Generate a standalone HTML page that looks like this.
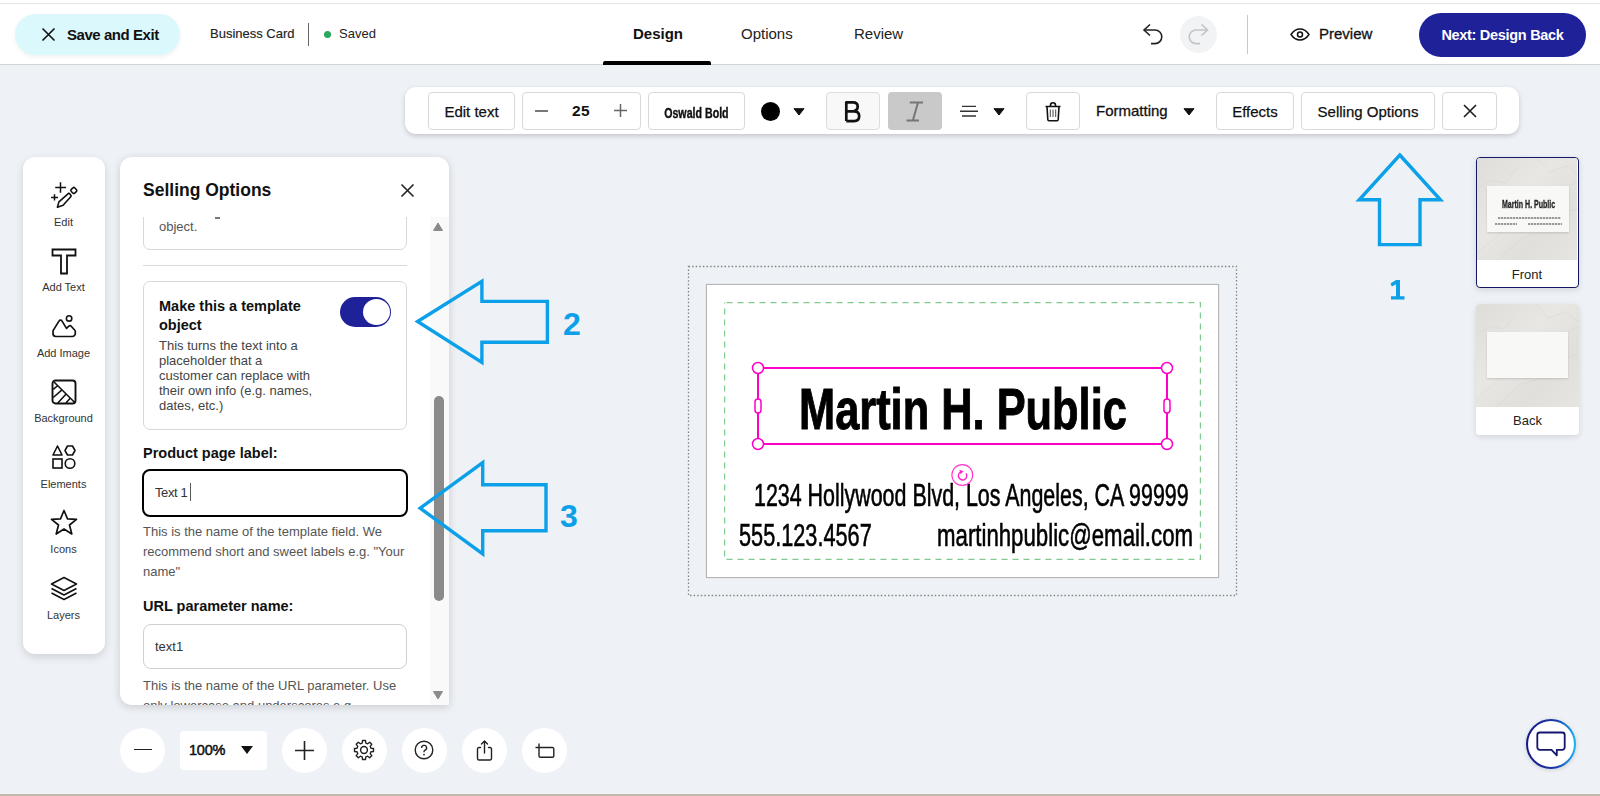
<!DOCTYPE html>
<html><head><meta charset="utf-8">
<style>
*{box-sizing:border-box;margin:0;padding:0}
html,body{width:1600px;height:796px;overflow:hidden}
body{background:#eef1f6;font-family:"Liberation Sans",sans-serif;color:#111;position:relative}
.a{position:absolute}
#topline{left:0;top:0;width:1600px;height:4px;background:#fff;border-bottom:1px solid #e6e6e6}
#hdr{left:0;top:4px;width:1600px;height:61px;background:#fff;border-bottom:1px solid #d4d4d4}
#botline{left:0;top:794px;width:1600px;height:2px;background:#c4b8a9}
.btn{position:absolute;border:1px solid #d9d9d9;border-radius:4px;background:#fff;font-size:15px;display:flex;align-items:center;justify-content:center;color:#111;-webkit-text-stroke:0.25px #111}
.ico svg{display:block}
</style></head><body>
<div class="a" id="topline"></div>
<div class="a" id="hdr"></div>
<div class="a" id="botline"></div>

<!-- header -->
<div class="a" style="left:15px;top:14px;width:165px;height:41px;border-radius:21px;background:#dbf8fd;box-shadow:0 2px 4px rgba(0,0,0,.06)"></div>
<svg class="a" style="left:41px;top:27px" width="15" height="15" viewBox="0 0 15 15"><path d="M1.5 1.5L13.5 13.5M13.5 1.5L1.5 13.5" stroke="#111" stroke-width="1.6"/></svg>
<div class="a" style="left:67px;top:26px;font-size:15px;font-weight:bold;color:#111;letter-spacing:-0.45px">Save and Exit</div>
<div class="a" style="left:210px;top:26px;font-size:13px;color:#222;-webkit-text-stroke:0.15px #222">Business Card</div>
<div class="a" style="left:308px;top:23px;width:1px;height:23px;background:#666"></div>
<div class="a" style="left:324px;top:31px;width:7px;height:7px;border-radius:50%;background:#27a85a"></div>
<div class="a" style="left:339px;top:26px;font-size:13px;color:#222">Saved</div>

<div class="a" style="left:633px;top:25px;font-size:15px;font-weight:bold;color:#111">Design</div>
<div class="a" style="left:603px;top:61px;width:108px;height:4px;background:#000;border-radius:2px 2px 0 0"></div>
<div class="a" style="left:741px;top:25px;font-size:15px;color:#222">Options</div>
<div class="a" style="left:854px;top:25px;font-size:15px;color:#222">Review</div>


<svg class="a" style="left:1141px;top:22px" width="26" height="24" viewBox="0 0 26 24"><path d="M9 2.5L3 8L9 13.5" fill="none" stroke="#222" stroke-width="1.6"/><path d="M3 8H14A6.8 6.8 0 0 1 14 21.6H10" fill="none" stroke="#222" stroke-width="1.6"/></svg>
<div class="a" style="left:1180px;top:16px;width:37px;height:37px;border-radius:50%;background:#f2f3f5"></div>
<svg class="a" style="left:1185px;top:22px" width="26" height="24" viewBox="0 0 26 24"><path d="M16.5 2.5L22.5 8L16.5 13.5" fill="none" stroke="#c4c4c4" stroke-width="1.6"/><path d="M22.5 8H11A6.8 6.8 0 0 0 11 21.6H15" fill="none" stroke="#c4c4c4" stroke-width="1.6"/></svg>
<div class="a" style="left:1247px;top:15px;width:1px;height:39px;background:#c8c8c8"></div>
<svg class="a" style="left:1290px;top:28px" width="20" height="13" viewBox="0 0 20 13"><path d="M1 6.5C4 2 7 1 10 1S16 2 19 6.5C16 11 13 12 10 12S4 11 1 6.5Z" fill="none" stroke="#111" stroke-width="1.4"/><circle cx="10" cy="6.5" r="2.5" fill="none" stroke="#111" stroke-width="1.5"/></svg>
<div class="a" style="left:1319px;top:25px;font-size:15px;color:#111;-webkit-text-stroke:0.3px #111">Preview</div>
<div class="a" style="left:1419px;top:13px;width:167px;height:44px;border-radius:22px;background:#1f2199;color:#fff;font-size:14.5px;font-weight:bold;display:flex;align-items:center;justify-content:center;letter-spacing:-0.3px">Next: Design Back</div>

<!-- toolbar -->
<div class="a" style="left:405px;top:87px;width:1114px;height:47px;background:#fff;border-radius:11px;box-shadow:0 2px 5px rgba(0,0,0,.18)"></div>
<div class="btn" style="left:428px;top:92px;width:87px;height:38px">Edit text</div>
<div class="btn" style="left:522px;top:92px;width:119px;height:38px"></div>
<div class="a" style="left:535px;top:110px;width:13px;height:1.5px;background:#777"></div>
<div class="a" style="left:572px;top:102px;font-size:15.5px;font-weight:bold;letter-spacing:0.5px">25</div>
<svg class="a" style="left:613px;top:103px" width="15" height="15" viewBox="0 0 15 15"><path d="M7.5 1V14M1 7.5H14" stroke="#666" stroke-width="1.5"/></svg>
<div class="btn" style="left:648px;top:92px;width:97px;height:38px"><span style="display:inline-block;margin-top:3px;font-weight:bold;font-size:14px;transform:scaleX(.76);-webkit-text-stroke:0.4px #111;letter-spacing:0px;white-space:nowrap">Oswald Bold</span></div>
<div class="a" style="left:761px;top:102px;width:19px;height:19px;border-radius:50%;background:#000"></div>
<svg class="a" style="left:793px;top:107.5px" width="12" height="8" viewBox="0 0 12 8"><path d="M1 0.7H11L6 7Z" stroke="#111" stroke-width="1" stroke-linejoin="round" fill="#111"/></svg>
<div class="a" style="left:826px;top:92px;width:54px;height:38px;border:1px solid #dcdcdc;border-radius:4px;background:#f8f8f8"></div>
<svg class="a" style="left:844px;top:101px" width="18" height="23" viewBox="0 0 18 23"><path d="M2.3 20.1V1.4H9C12.2 1.4 13.7 3.1 13.7 5.6C13.7 8.2 12.2 9.9 9.3 10.3H2.3M2.3 10.3H10C13.4 10.3 15.2 12.1 15.2 15C15.2 18.3 13.2 20.1 10 20.1H2.3" fill="none" stroke="#111" stroke-width="2.7" stroke-linejoin="round"/></svg>
<div class="a" style="left:888px;top:92px;width:54px;height:38px;border-radius:4px;background:#c9c9c9"></div>
<svg class="a" style="left:904px;top:101px" width="20" height="22" viewBox="0 0 20 22"><path d="M5.8 1.5H19M2.5 19.6H15M14 1.5L8.8 19.6" fill="none" stroke="#777" stroke-width="2"/></svg>
<svg class="a" style="left:959px;top:105px" width="20" height="13" viewBox="0 0 20 13"><path d="M3 1.4H17M1 6.2H19M3 11H17" stroke="#333" stroke-width="1.4"/></svg>
<svg class="a" style="left:993px;top:107.5px" width="12" height="8" viewBox="0 0 12 8"><path d="M1 0.7H11L6 7Z" stroke="#111" stroke-width="1" stroke-linejoin="round" fill="#111"/></svg>
<div class="btn" style="left:1026px;top:92px;width:54px;height:38px"></div>
<svg class="a" style="left:1044px;top:101px" width="18" height="22" viewBox="0 0 18 22"><path d="M1.5 5.5H16.5M6.5 5.5V4.2A2.5 2.5 0 0 1 11.5 4.2V5.5M3 5.5L3.8 18.5Q3.9 19.8 5 19.8H13Q14.1 19.8 14.2 18.5L15 5.5" fill="none" stroke="#111" stroke-width="1.6" stroke-linejoin="round"/><path d="M6.3 8.5V16M9 8.5V16M11.7 8.5V16" stroke="#333" stroke-width="0.9"/></svg>
<div class="a" style="left:1096px;top:102px;font-size:15px;color:#111;-webkit-text-stroke:0.3px #111">Formatting</div>
<svg class="a" style="left:1183px;top:107.5px" width="12" height="8" viewBox="0 0 12 8"><path d="M1 0.7H11L6 7Z" stroke="#111" stroke-width="1" stroke-linejoin="round" fill="#111"/></svg>
<div class="btn" style="left:1216px;top:92px;width:78px;height:38px">Effects</div>
<div class="btn" style="left:1301px;top:92px;width:134px;height:38px">Selling Options</div>
<div class="btn" style="left:1442px;top:92px;width:55px;height:38px"><svg width="14" height="14" viewBox="0 0 14 14"><path d="M1 1L13 13M13 1L1 13" stroke="#222" stroke-width="1.7"/></svg></div>

<!-- left sidebar -->
<div class="a" style="left:23px;top:157px;width:82px;height:497px;background:#fff;border-radius:12px;box-shadow:0 3px 8px rgba(0,0,0,.14)"></div>
<svg class="a" style="left:48px;top:180px" width="32" height="30" viewBox="0 0 32 30"><path d="M12.5 2.3V12.7M7.2 7.6H18.1M6.5 14.2V20.4M3.1 17.4H10" stroke="#111" stroke-width="1.5"/><path d="M21.1 12.9L10.9 21.9L9.4 27.2L15.1 25.3L23.4 16" fill="none" stroke="#111" stroke-width="1.6" stroke-linejoin="round"/><path d="M21.1 12.9L23.4 16" stroke="#111" stroke-width="1.6"/><rect x="23.3" y="8" width="5" height="5" rx="1.3" transform="rotate(-42 25.8 10.5)" fill="none" stroke="#111" stroke-width="1.6"/></svg>
<div class="a lbl" style="left:22px;top:216px;width:83px;text-align:center;font-size:11px;color:#333">Edit</div>
<svg class="a" style="left:51px;top:248px" width="26" height="27" viewBox="0 0 26 27"><path d="M1.5 1.5H24.5V7.5H16V25.5H10V7.5H1.5Z" fill="none" stroke="#111" stroke-width="1.8"/></svg>
<div class="a lbl" style="left:22px;top:281px;width:83px;text-align:center;font-size:11px;color:#333">Add Text</div>
<svg class="a" style="left:51px;top:313px" width="27" height="26" viewBox="0 0 27 26"><circle cx="18.1" cy="5.4" r="2.7" fill="none" stroke="#111" stroke-width="1.6"/><path d="M5 23.5H21A3 3 0 0 0 24.3 20.5V18.6A2.2 2.2 0 0 0 23.6 17L20.2 13.2A1.6 1.6 0 0 0 17.9 13.1L15.5 15.4L10.9 7.9A1.6 1.6 0 0 0 8.1 7.9L2.7 16.6A3.4 3.4 0 0 0 2 18.6V20.5A3 3 0 0 0 5 23.5Z" fill="none" stroke="#111" stroke-width="1.7" stroke-linejoin="round"/></svg>
<div class="a lbl" style="left:22px;top:347px;width:83px;text-align:center;font-size:11px;color:#333">Add Image</div>
<svg class="a" style="left:51px;top:379px" width="26" height="26" viewBox="0 0 26 26"><rect x="1.5" y="1.5" width="23" height="23" rx="3" fill="none" stroke="#111" stroke-width="1.9"/><path d="M3 3L23.5 23.2M2.2 10.4L6.3 7M2.2 18.5L10.4 11.3M6.8 24L14.9 15.2M14.9 24L19 19.5" stroke="#111" stroke-width="1.6"/></svg>
<div class="a lbl" style="left:22px;top:412px;width:83px;text-align:center;font-size:11px;color:#333">Background</div>
<svg class="a" style="left:51px;top:444px" width="26" height="26" viewBox="0 0 26 26"><path d="M2 11H11L6.5 2Z" fill="none" stroke="#111" stroke-width="1.6" stroke-linejoin="round"/><path d="M16.5 2H21.5L24 6.5L21.5 11H16.5L14 6.5Z" fill="none" stroke="#111" stroke-width="1.6" stroke-linejoin="round"/><rect x="2" y="15" width="9" height="9" fill="none" stroke="#111" stroke-width="1.6"/><circle cx="19" cy="19.5" r="4.8" fill="none" stroke="#111" stroke-width="1.6"/></svg>
<div class="a lbl" style="left:22px;top:478px;width:83px;text-align:center;font-size:11px;color:#333">Elements</div>
<svg class="a" style="left:50px;top:509px" width="28" height="27" viewBox="0 0 28 27"><path d="M14 1.5L17.5 9.8L26.5 10.3L19.5 16L21.8 25L14 20L6.2 25L8.5 16L1.5 10.3L10.5 9.8Z" fill="none" stroke="#111" stroke-width="1.7" stroke-linejoin="round"/></svg>
<div class="a lbl" style="left:22px;top:543px;width:83px;text-align:center;font-size:11px;color:#333">Icons</div>
<svg class="a" style="left:50px;top:576px" width="28" height="25" viewBox="0 0 28 25"><path d="M14 1.5L26.5 8L14 14.5L1.5 8Z" fill="none" stroke="#111" stroke-width="1.6" stroke-linejoin="round"/><path d="M1.5 12.5L14 19L26.5 12.5M1.5 17L14 23.5L26.5 17" fill="none" stroke="#111" stroke-width="1.6" stroke-linejoin="round"/></svg>
<div class="a lbl" style="left:22px;top:609px;width:83px;text-align:center;font-size:11px;color:#333">Layers</div>

<!-- panel -->
<div class="a" style="left:120px;top:157px;width:329px;height:548px;background:#fff;border-radius:12px 12px 0 12px;box-shadow:0 2px 8px rgba(0,0,0,.16)"></div>
<div class="a" style="left:143px;top:180px;font-size:17.5px;font-weight:bold;color:#111">Selling Options</div>
<svg class="a" style="left:400px;top:183px" width="15" height="15" viewBox="0 0 15 15"><path d="M1.5 1.5L13.5 13.5M13.5 1.5L1.5 13.5" stroke="#222" stroke-width="1.6"/></svg>
<div class="a" style="left:430px;top:217px;width:19px;height:488px;background:#f9f9f9"></div>
<svg class="a" style="left:433px;top:222px" width="10" height="9" viewBox="0 0 10 9"><path d="M5 1L9.5 8.5H0.5Z" fill="#8a8a8a" stroke="#8a8a8a" stroke-linejoin="round"/></svg>
<svg class="a" style="left:433px;top:691px" width="10" height="9" viewBox="0 0 10 9"><path d="M5 8L9.5 0.5H0.5Z" fill="#8a8a8a" stroke="#8a8a8a" stroke-linejoin="round"/></svg>
<div class="a" style="left:434px;top:396px;width:10px;height:205px;background:#8a8a8a;border-radius:5px"></div>
<div class="a" style="left:120px;top:217px;width:310px;height:488px;overflow:hidden">
  <div class="a" style="left:23px;top:-40px;width:264px;height:73px;border:1px solid #d8d8d8;border-radius:7px"></div>
  <div class="a" style="left:39px;top:2px;font-size:13px;color:#555">object.</div><div class="a" style="left:95px;top:0px;width:5px;height:1.5px;background:#777"></div>
  <div class="a" style="left:23px;top:48px;width:264px;height:1px;background:#dadada"></div>
  <div class="a" style="left:23px;top:64px;width:264px;height:149px;border:1px solid #d8d8d8;border-radius:7px"></div>
  <div class="a" style="left:39px;top:80px;width:190px;font-size:14.5px;line-height:19px;font-weight:bold;color:#111">Make this a template<br>object</div>
  <div class="a" style="left:39px;top:121px;width:190px;font-size:13px;line-height:15px;color:#444">This turns the text into a<br>placeholder that a<br>customer can replace with<br>their own info (e.g. names,<br>dates, etc.)</div>
  <div class="a" style="left:220px;top:80px;width:51px;height:30px;border-radius:15px;background:#1f2199"></div>
  <div class="a" style="left:243px;top:82px;width:27px;height:26px;border-radius:50%;background:#fff"></div>
  <div class="a" style="left:23px;top:228px;font-size:14.5px;font-weight:bold;color:#111">Product page label:</div>
  <div class="a" style="left:22px;top:252px;width:266px;height:48px;border:2.5px solid #000;border-radius:8px"></div>
  <div class="a" style="left:35px;top:268px;font-size:13px;color:#333;letter-spacing:-0.4px">Text 1</div>
  <div class="a" style="left:70px;top:266px;width:1px;height:18px;background:#555"></div>
  <div class="a" style="left:23px;top:305px;width:290px;font-size:13px;line-height:20px;color:#555">This is the name of the template field. We<br>recommend short and sweet labels e.g. "Your<br>name"</div>
  <div class="a" style="left:23px;top:381px;font-size:14.5px;font-weight:bold;color:#111">URL parameter name:</div>
  <div class="a" style="left:23px;top:407px;width:264px;height:45px;border:1px solid #d0d0d0;border-radius:8px"></div>
  <div class="a" style="left:35px;top:422px;font-size:13px;color:#333">text1</div>
  <div class="a" style="left:23px;top:459px;width:290px;font-size:13px;line-height:20px;color:#555">This is the name of the URL parameter. Use<br>only lowercase and underscores e.g.</div>
</div>

<!-- canvas -->
<svg class="a" style="left:687px;top:265px" width="551" height="332" viewBox="0 0 551 332"><rect x="1.5" y="1.5" width="548" height="329" fill="none" stroke="#858585" stroke-width="1.3" stroke-dasharray="1.5 2.1"/></svg>
<div class="a" style="left:706px;top:284px;width:513px;height:294px;background:#fff;border:1px solid #b5b5b5;box-shadow:0 0 1px rgba(0,0,0,.2)"></div>
<svg class="a" style="left:724px;top:302px" width="477" height="258" viewBox="0 0 477 258"><rect x="0.5" y="0.5" width="476" height="257" fill="none" stroke="#82c891" stroke-width="1.4" stroke-dasharray="6 5" stroke-dashoffset="-2"/></svg>
<div class="a" id="nm" style="left:799px;top:376px;font-size:58px;font-weight:bold;color:#000;white-space:nowrap;transform-origin:0 0;transform:scaleX(.748);line-height:66px;-webkit-text-stroke:1px #000">Martin H. Public</div>
<div class="a" id="ad" style="left:754px;top:479px;font-size:31px;color:#000;white-space:nowrap;transform-origin:0 0;transform:scaleX(.691);line-height:34px;-webkit-text-stroke:0.6px #000">1234 Hollywood Blvd, Los Angeles, CA 99999</div>
<div class="a" id="ph" style="left:739px;top:519px;font-size:31px;color:#000;white-space:nowrap;transform-origin:0 0;transform:scaleX(.70);line-height:34px;-webkit-text-stroke:0.6px #000">555.123.4567</div>
<div class="a" id="em" style="left:937px;top:519px;font-size:31px;color:#000;white-space:nowrap;transform-origin:0 0;transform:scaleX(.717);line-height:34px;-webkit-text-stroke:0.6px #000">martinhpublic@email.com</div>
<svg class="a" style="left:745px;top:355px" width="435" height="135" viewBox="0 0 435 135"><rect x="13" y="13" width="409" height="76" fill="none" stroke="#ff00c8" stroke-width="2"/><g fill="#fff" stroke="#ff00c8" stroke-width="1.5"><circle cx="13" cy="13" r="5.5"/><circle cx="422" cy="13" r="5.5"/><circle cx="13" cy="89" r="5.5"/><circle cx="422" cy="89" r="5.5"/><rect x="10" y="44" width="6" height="14" rx="3"/><rect x="419" y="44" width="6" height="14" rx="3"/></g><circle cx="217.3" cy="120" r="10.4" fill="#fff" fill-opacity="0" stroke="#ff33cc" stroke-width="1.1"/><path d="M221 118.3A4.2 4.2 0 1 1 215.8 116.9" fill="none" stroke="#ff22cc" stroke-width="1.4"/><path d="M214.3 114.8L218.6 116.3L215.6 119.3Z" fill="#ff22cc"/></svg>

<!-- thumbnails -->
<div class="a" style="left:1476px;top:157px;width:103px;height:131px;border:1.5px solid #15166a;border-radius:4px;overflow:hidden;background:#fff;box-shadow:0 2px 6px rgba(0,0,0,.12)">
  <div class="a" style="left:0;top:0;width:100px;height:102px;background:linear-gradient(135deg,#dfddda,#e8e7e4 40%,#e0dfdb 70%,#e6e5e2)"></div><svg class="a" style="left:0;top:0" width="103" height="103" viewBox="0 0 103 103"><g fill="none" stroke="#cfcbc4" stroke-width="0.7" opacity=".4"><path d="M0 95L30 70L48 62L70 40L103 22"/><path d="M20 103L45 80L60 76L85 55L103 50"/><path d="M60 0L72 14L90 8L103 18"/><path d="M0 30L15 22L28 25L40 10"/></g></svg>
  <div class="a" style="left:10px;top:28px;width:82px;height:46px;background:#f8f8f7;box-shadow:0 1px 2px rgba(0,0,0,.15)"></div>
  <div class="a" style="left:25px;top:40px;font-size:11px;font-weight:bold;color:#222;white-space:nowrap;transform-origin:0 0;transform:scaleX(.64);-webkit-text-stroke:0.3px #222">Martin H. Public</div>
  <div class="a" style="left:21px;top:59px;width:63px;height:2px;background:repeating-linear-gradient(90deg,#9a9a9a 0 2px,#d8d8d8 2px 3px)"></div>
  <div class="a" style="left:18px;top:65px;width:22px;height:2px;background:repeating-linear-gradient(90deg,#9a9a9a 0 2px,#d8d8d8 2px 3px)"></div>
  <div class="a" style="left:51px;top:65px;width:34px;height:2px;background:repeating-linear-gradient(90deg,#9a9a9a 0 2px,#d8d8d8 2px 3px)"></div>
  <div class="a" style="left:0;top:104px;width:100px;text-align:center;font-size:13px;color:#222;line-height:26px">Front</div>
</div>
<div class="a" style="left:1476px;top:304px;width:103px;height:131px;border-radius:4px;overflow:hidden;background:#fff;box-shadow:0 2px 6px rgba(0,0,0,.12)">
  <div class="a" style="left:0;top:0;width:103px;height:103px;background:linear-gradient(135deg,#dfddda,#e8e7e4 40%,#e0dfdb 70%,#e6e5e2)"></div><svg class="a" style="left:0;top:0" width="103" height="103" viewBox="0 0 103 103"><g fill="none" stroke="#cfcbc4" stroke-width="0.7" opacity=".4"><path d="M0 95L30 70L48 62L70 40L103 22"/><path d="M20 103L45 80L60 76L85 55L103 50"/><path d="M60 0L72 14L90 8L103 18"/><path d="M0 30L15 22L28 25L40 10"/></g></svg>
  <div class="a" style="left:11px;top:28px;width:81px;height:46px;background:#f8f8f7;box-shadow:0 1px 2px rgba(0,0,0,.15)"></div>
  <div class="a" style="left:0;top:104px;width:103px;text-align:center;font-size:13px;color:#222;line-height:26px">Back</div>
</div>

<!-- arrows -->
<svg class="a" style="left:0;top:0" width="1600" height="796" viewBox="0 0 1600 796"><g fill="none" stroke="#0ba0e8" stroke-width="3.4" stroke-linejoin="miter"><path d="M1399.8 155L1440.4 199.8H1420V244.6H1379.5V199.8H1359.2Z"/><path d="M417.6 321.5L481.9 281.3V301.4H547.4V342.3H481.9V362.4Z"/><path d="M420.2 508.2L482.7 462.6V484.7H546V530.7H482.7V553.8Z"/></g></svg>
<svg class="a" style="left:1389px;top:279px" width="17" height="22" viewBox="0 0 17 22"><path d="M7 1H11V17.3H15.5V20.5H2V17.3H7V5.2L2.8 7.6L1.5 4.6Z" fill="#0ba0e8"/></svg>
<div class="a" style="left:563px;top:306px;font-size:32px;font-weight:bold;color:#0ba0e8">2</div>
<div class="a" style="left:560px;top:498px;font-size:32px;font-weight:bold;color:#0ba0e8">3</div>

<!-- bottom controls -->
<div class="a" style="left:120px;top:728px;width:45px;height:45px;border-radius:50%;background:#fff"></div>
<div class="a" style="left:134px;top:749px;width:18px;height:1.3px;background:#222"></div>
<div class="a" style="left:180px;top:731px;width:87px;height:39px;border-radius:4px;background:#fff"></div>
<div class="a" style="left:189px;top:742px;font-size:14.5px;color:#111;-webkit-text-stroke:0.5px #111;letter-spacing:-0.2px">100%</div>
<svg class="a" style="left:241px;top:746px" width="12" height="8" viewBox="0 0 12 8"><path d="M0 0H12L6 8Z" fill="#111"/></svg>
<div class="a" style="left:282px;top:728px;width:45px;height:45px;border-radius:50%;background:#fff"></div>
<svg class="a" style="left:295px;top:741px" width="19" height="19" viewBox="0 0 19 19"><path d="M9.5 0V19M0 9.5H19" stroke="#222" stroke-width="1.6"/></svg>
<div class="a" style="left:342px;top:728px;width:45px;height:45px;border-radius:50%;background:#fff"></div>
<svg class="a" style="left:352px;top:738px" width="24" height="24" viewBox="0 0 24 24"><path d="M21.48 10.50 L21.48 13.50 L18.97 13.79 L18.20 15.67 L19.77 17.64 L17.64 19.77 L15.67 18.20 L13.79 18.97 L13.50 21.48 L10.50 21.48 L10.21 18.97 L8.33 18.20 L6.36 19.77 L4.23 17.64 L5.80 15.67 L5.03 13.79 L2.52 13.50 L2.52 10.50 L5.03 10.21 L5.80 8.33 L4.23 6.36 L6.36 4.23 L8.33 5.80 L10.21 5.03 L10.50 2.52 L13.50 2.52 L13.79 5.03 L15.67 5.80 L17.64 4.23 L19.77 6.36 L18.20 8.33 L18.97 10.21Z" fill="none" stroke="#222" stroke-width="1.4" stroke-linejoin="round"/><circle cx="12" cy="12" r="3.4" fill="none" stroke="#222" stroke-width="1.5"/></svg>
<div class="a" style="left:402px;top:728px;width:45px;height:45px;border-radius:50%;background:#fff"></div>
<svg class="a" style="left:414px;top:740px" width="20" height="20" viewBox="0 0 20 20"><circle cx="10" cy="10" r="8.8" fill="none" stroke="#222" stroke-width="1.4"/><path d="M7.6 7.9A2.5 2.5 0 1 1 11 10.2C10.4 10.6 10 11 10 11.7V12.2" fill="none" stroke="#222" stroke-width="1.4"/><circle cx="10" cy="14.6" r="0.9" fill="#222"/></svg>
<div class="a" style="left:462px;top:728px;width:45px;height:45px;border-radius:50%;background:#fff"></div>
<svg class="a" style="left:476px;top:739px" width="17" height="23" viewBox="0 0 17 23"><path d="M8.5 14V2M5.5 5L8.5 2L11.5 5M4.5 8.5H3A1.5 1.5 0 0 0 1.5 10V19.5A1.5 1.5 0 0 0 3 21H14A1.5 1.5 0 0 0 15.5 19.5V10A1.5 1.5 0 0 0 14 8.5H12.5" fill="none" stroke="#222" stroke-width="1.4" stroke-linejoin="round" stroke-linecap="round"/></svg>
<div class="a" style="left:522px;top:728px;width:45px;height:45px;border-radius:50%;background:#fff"></div>
<svg class="a" style="left:533px;top:741px" width="22" height="18" viewBox="0 0 22 18"><path d="M2.5 6.5H19.5A1.3 1.3 0 0 1 20.8 7.8V15A1.3 1.3 0 0 1 19.5 16.3H7.3A1.3 1.3 0 0 1 6 15V2.5" fill="none" stroke="#222" stroke-width="1.4"/></svg>

<!-- chat -->
<svg class="a" style="left:1525px;top:718px;filter:drop-shadow(0 1px 2px rgba(0,0,0,.15))" width="52" height="52" viewBox="0 0 52 52"><defs><linearGradient id="cg" x1="0" y1="0" x2="1" y2="0"><stop offset="0" stop-color="#16168a"/><stop offset=".6" stop-color="#1a3aa8"/><stop offset="1" stop-color="#18b0f2"/></linearGradient></defs><circle cx="26" cy="26" r="24" fill="#fff" stroke="url(#cg)" stroke-width="2"/><path d="M14.8 14.5H37.2A2.5 2.5 0 0 1 39.7 17V29.3A2.5 2.5 0 0 1 37.2 31.8H31.8V37.3L26.5 31.8H14.8A2.5 2.5 0 0 1 12.3 29.3V17A2.5 2.5 0 0 1 14.8 14.5Z" fill="none" stroke="#15156e" stroke-width="1.8" stroke-linejoin="round"/></svg>
</body></html>
